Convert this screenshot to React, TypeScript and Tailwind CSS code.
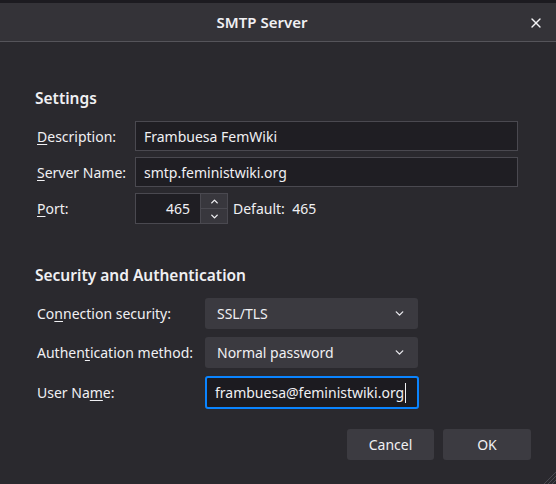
import { ChevronDown, ChevronUp, X } from "lucide-react"

function U({ children }: { children: string }) {
  return <span className="underline underline-offset-2">{children}</span>
}

function Select({ value }: { value: string }) {
  return (
    <div className="flex h-[31px] w-[213px] items-center justify-between rounded-[3px] bg-[#3b3a40] pl-3 pr-3">
      <span>{value}</span>
      <ChevronDown size={13} strokeWidth={2.5} className="text-[#e8e8ec]" />
    </div>
  )
}

export default function App() {
  return (
    <div
      className="flex h-[484px] w-[556px] flex-col overflow-hidden bg-[#2a292e] text-[14px] text-[#f0f0f3]"
      style={{ fontFamily: '"Noto Sans", "Open Sans", sans-serif' }}
    >
      <div className="h-[3px] bg-[#1c1b20]" />
      <div className="relative flex h-[39px] items-center justify-center border-b border-[#55545a] bg-[#343338] pr-[32px]">
        <span className="text-[15px] font-semibold">SMTP Server</span>
        <X size={16} strokeWidth={2} className="absolute right-[12px] top-[12px] text-[#f4f4f6]" />
      </div>

      <div className="relative flex flex-1 flex-col pl-[35px] pr-[38px]">
        <h2 className="mt-[46px] text-[15.5px] font-semibold leading-[20px]">Settings</h2>

        <div className="mt-[13px] grid grid-cols-[98px_1fr] items-center gap-y-[6px] pl-[2px]">
          <label>
            <U>D</U>escription:
          </label>
          <div className="flex h-[30px] items-center border border-[#4a4950] bg-[#1f1e23] px-[8px]">
            Frambuesa FemWiki
          </div>

          <label>
            <U>S</U>erver Name:
          </label>
          <div className="flex h-[30px] items-center border border-[#4a4950] bg-[#1f1e23] px-[8px]">
            smtp.feministwiki.org
          </div>

          <label>
            <U>P</U>ort:
          </label>
          <div className="flex items-center gap-[5px]">
            <div className="flex h-[31px] w-[93px] border border-[#4a4950] bg-[#1f1e23]">
              <span className="flex flex-1 items-center justify-end pr-[10px]">465</span>
              <div className="flex w-[27px] flex-col border-l border-[#4a4950]">
                <div className="flex flex-1 items-center justify-center border-b border-[#4a4950] bg-[#38373d]">
                  <ChevronUp size={11} strokeWidth={3} />
                </div>
                <div className="flex flex-1 items-center justify-center bg-[#38373d]">
                  <ChevronDown size={11} strokeWidth={3} />
                </div>
              </div>
            </div>
            <span>Default:&nbsp; 465</span>
          </div>
        </div>

        <h2 className="mt-[41px] text-[15.5px] font-semibold leading-[20px]">Security and Authentication</h2>

        <div className="mt-[13px] grid grid-cols-[168px_1fr] items-center gap-y-[8px] pl-[2px]">
          <label>
            Co<U>n</U>nection security:
          </label>
          <Select value="SSL/TLS" />

          <label>
            Authen<U>t</U>ication method:
          </label>
          <Select value="Normal password" />

          <label>
            User Na<U>m</U>e:
          </label>
          <div className="flex h-[33px] w-[214px] items-center rounded-[3px] border-2 border-[#0a84ff] bg-[#1c1b20] pl-[8px]">
            frambuesa@feministwiki.org
            <span className="ml-[1px] h-[20px] w-[1px] bg-[#f0f0f3]" />
          </div>
        </div>

        <div className="mt-[20px] flex justify-end gap-[9px]">
          <button className="h-[31px] w-[87px] rounded-[3px] bg-[#3c3b41]">Cancel</button>
          <button className="mr-[-13px] h-[31px] w-[88px] rounded-[3px] bg-[#3c3b41]">OK</button>
        </div>

        <svg className="absolute bottom-0 right-0" width="14" height="14" viewBox="0 0 14 14">
          <path d="M14 2 L2 14 M14 6 L6 14 M14 10 L10 14" stroke="#4a4950" strokeWidth="1" />
        </svg>
      </div>
    </div>
  )
}
